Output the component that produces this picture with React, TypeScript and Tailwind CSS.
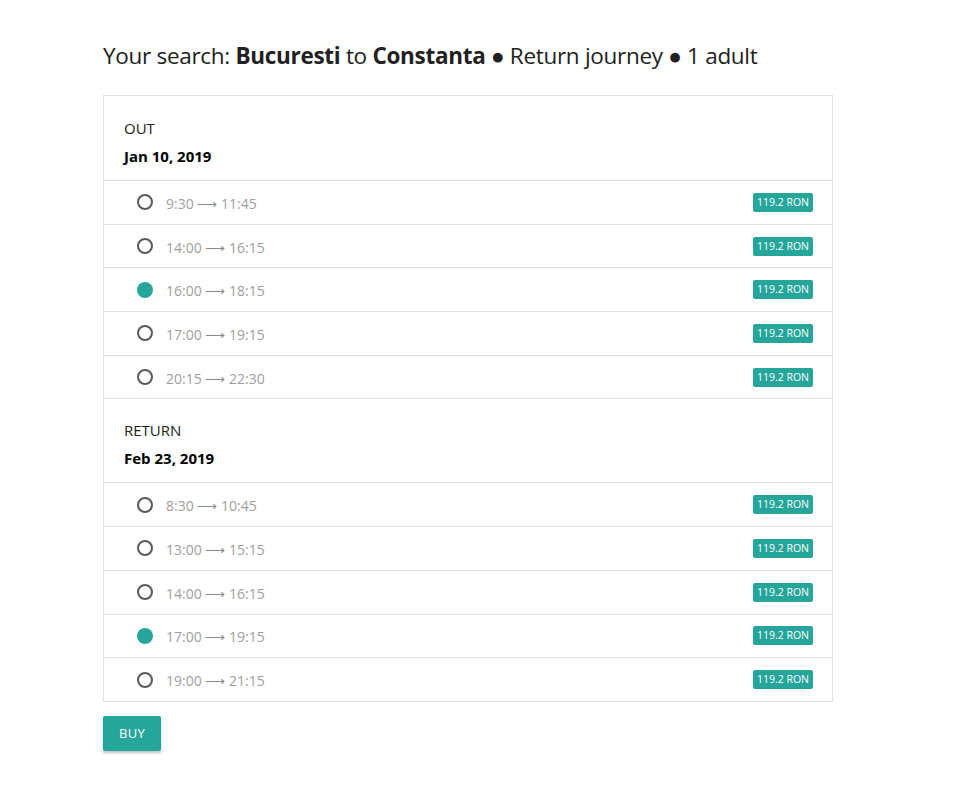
import React from "react";

const out = [
  ["9:30", "11:45", false],
  ["14:00", "16:15", false],
  ["16:00", "18:15", true],
  ["17:00", "19:15", false],
  ["20:15", "22:30", false],
] as const;
const ret = [
  ["8:30", "10:45", false],
  ["13:00", "15:15", false],
  ["14:00", "16:15", false],
  ["17:00", "19:15", true],
  ["19:00", "21:15", false],
] as const;

function Row({ from, to, sel }: { from: string; to: string; sel: boolean }) {
  return (
    <div className="flex h-[43.7px] items-center border-t border-[#e0e0e0] pl-[33px] pr-[19px]">
      {sel ? (
        <span className="h-[16px] w-[16px] rounded-full bg-[#26a69a]" />
      ) : (
        <span className="h-[16px] w-[16px] rounded-full border-2 border-[#5a5a5a]" />
      )}
      <span className="ml-[13px] mt-[2px] text-[14px] text-[#9e9e9e]">
        {from} <span className="text-[#8a8a8a]">⟶</span> {to}
      </span>
      <span className="ml-auto rounded-[2px] bg-[#26a69a] px-[4px] text-[10.5px] leading-[19px] text-white">
        119.2 RON
      </span>
    </div>
  );
}

function Header({ label, date, first }: { label: string; date: string; first?: boolean }) {
  return (
    <div className={`px-[20px] pb-[12px] ${first ? "pt-[20px]" : "pt-[19px] border-t border-[#e0e0e0]"}`}>
      <div className="text-[15px] leading-[24px] text-[#212121]">{label}</div>
      <div className="mt-[4px] text-[15px] font-bold leading-[24px] text-[#000]">{date}</div>
    </div>
  );
}

export default function App() {
  return (
    <div
      className="min-h-screen bg-white pl-[103px] pt-[38px]"
      style={{ fontFamily: '"Open Sans", "Noto Sans", sans-serif' }}
    >
      <h1 className="text-[22.5px] leading-[36px] text-[#212121] tracking-[-0.3px]">
        Your search: <b>Bucuresti</b> to <b>Constanta</b> ● Return journey ● 1 adult
      </h1>
      <div className="mt-[21px] w-[730px] border border-[#e0e0e0]">
        <Header label="OUT" date="Jan 10, 2019" first />
        {out.map(([a, b, s], i) => (
          <Row key={i} from={a} to={b} sel={s} />
        ))}
        <Header label="RETURN" date="Feb 23, 2019" />
        {ret.map(([a, b, s], i) => (
          <Row key={i} from={a} to={b} sel={s} />
        ))}
      </div>
      <button className="mt-[14px] h-[35px] rounded-[2px] bg-[#26a69a] px-[16px] text-[13px] uppercase tracking-[0.3px] text-white shadow-[0_2px_3px_rgba(0,0,0,0.25)]">
        Buy
      </button>
    </div>
  );
}
